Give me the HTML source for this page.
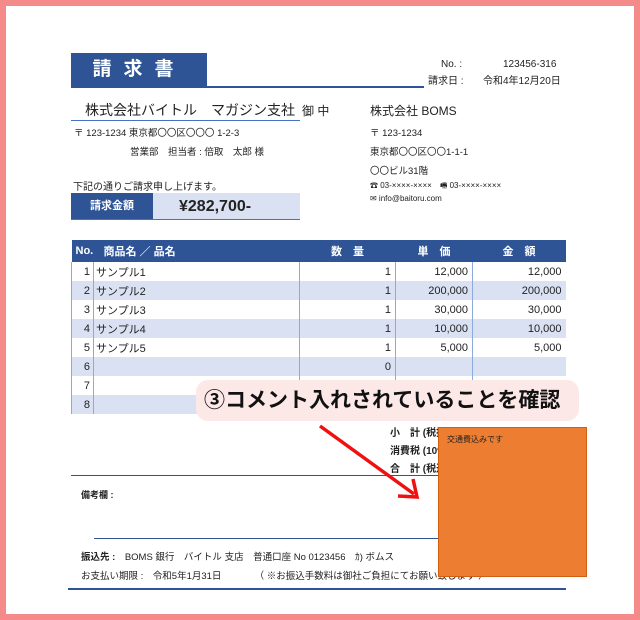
<!DOCTYPE html>
<html><head><meta charset="utf-8"><style>
*{margin:0;padding:0;box-sizing:border-box}
body{width:640px;height:620px;position:relative;background:#fff;font-family:"Liberation Sans","Noto Sans CJK JP",sans-serif;color:#222;overflow:hidden}
.frame{position:absolute;left:0;top:0;width:640px;height:620px;border:6px solid #f48a8a}
.a{position:absolute;white-space:nowrap}
.s{font-size:10px}
table{position:absolute;left:71px;top:240px;width:494px;table-layout:fixed;border-collapse:collapse;font-size:11px}
td,th{height:19px;padding:0 4px;overflow:hidden;white-space:nowrap}
th{background:#2f5496;color:#fff;height:22px;font-weight:bold;font-size:11px}
tr.b td{background:#d9e1f2}
td{border-left:1px solid #8ea9db}
td.n{text-align:right}
td:first-child{padding:0 3px}
td:nth-child(2){padding-left:2px}
</style></head><body>
<div class="frame"></div>
<div class="a" style="left:71px;top:53px;width:136px;height:34px;background:#2f5496;color:#fff;font-size:19px;font-weight:bold;line-height:34px;text-align:center;letter-spacing:12px">請求書</div>
<div class="a" style="left:71px;top:86px;width:353px;height:2px;background:#2f5496"></div>
<div class="a s" style="left:441px;top:59px">No. :</div>
<div class="a s" style="left:503px;top:59px">123456-316</div>
<div class="a s" style="left:428px;top:72px">請求日 :</div>
<div class="a s" style="left:483px;top:72px">令和4年12月20日</div>
<div class="a" style="left:85px;top:100px;font-size:14px">株式会社バイトル　マガジン支社</div>
<div class="a" style="left:302px;top:102px;font-size:12px">御 中</div>
<div class="a" style="left:71px;top:120px;width:229px;height:1px;background:#4472c4"></div>
<div class="a" style="left:74px;top:125px;font-size:9.5px">〒 123-1234 東京都〇〇区〇〇〇 1-2-3</div>
<div class="a" style="left:130px;top:144px;font-size:9.5px">営業部　担当者 : 倍取　太郎 様</div>
<div class="a" style="left:73px;top:178px;font-size:10px">下記の通りご請求申し上げます。</div>
<div class="a" style="left:71px;top:193px;width:82px;height:27px;background:#2f5496;color:#fff;font-size:11px;font-weight:bold;line-height:27px;text-align:center">請求金額</div>
<div class="a" style="left:153px;top:193px;width:147px;height:27px;background:#d9e1f2;font-size:16px;font-weight:bold;line-height:27px;padding-left:26px">¥282,700-</div>
<div class="a" style="left:71px;top:219px;width:229px;height:1px;background:#4472c4"></div>
<div class="a" style="left:370px;top:102px;font-size:12px">株式会社 BOMS</div>
<div class="a" style="left:370px;top:125px;font-size:9.5px">〒 123-1234</div>
<div class="a" style="left:370px;top:144px;font-size:9.5px">東京都〇〇区〇〇1-1-1</div>
<div class="a" style="left:370px;top:163px;font-size:9.5px">〇〇ビル31階</div>
<div class="a" style="left:370px;top:180px;font-size:8px">☎ 03-××××-××××　🖷 03-××××-××××</div>
<div class="a" style="left:370px;top:194px;font-size:8px">✉ info@baitoru.com</div>
<table>
<colgroup><col style="width:22px"><col style="width:206px"><col style="width:96px"><col style="width:77px"><col style="width:93px"></colgroup>
<tr><th style="text-align:left;padding-left:4px">No.</th><th style="text-align:left;padding-left:10px">商品名 ／ 品名</th><th>数　量</th><th>単　価</th><th>金　額</th></tr>
<tr><td class="n">1</td><td>サンプル1</td><td class="n">1</td><td class="n">12,000</td><td class="n">12,000</td></tr>
<tr class="b"><td class="n">2</td><td>サンプル2</td><td class="n">1</td><td class="n">200,000</td><td class="n">200,000</td></tr>
<tr><td class="n">3</td><td>サンプル3</td><td class="n">1</td><td class="n">30,000</td><td class="n">30,000</td></tr>
<tr class="b"><td class="n">4</td><td>サンプル4</td><td class="n">1</td><td class="n">10,000</td><td class="n">10,000</td></tr>
<tr><td class="n">5</td><td>サンプル5</td><td class="n">1</td><td class="n">5,000</td><td class="n">5,000</td></tr>
<tr class="b"><td class="n">6</td><td></td><td class="n">0</td><td></td><td></td></tr>
<tr><td class="n">7</td><td></td><td></td><td></td><td></td></tr>
<tr class="b"><td class="n">8</td><td></td><td></td><td></td><td></td></tr>
</table>
<div class="a" style="left:390px;top:424px;font-size:10px;font-weight:bold">小　計 (税抜)</div>
<div class="a" style="left:390px;top:442px;font-size:10px;font-weight:bold">消費税 (10%)</div>
<div class="a" style="left:390px;top:460px;font-size:10px;font-weight:bold">合　計 (税込)</div>
<div class="a" style="left:71px;top:475px;width:494px;height:1px;background:#2f5496"></div>
<div class="a" style="left:81px;top:488px;font-size:9px;font-weight:bold">備考欄 :</div>
<div class="a" style="left:94px;top:538px;width:470px;height:1px;background:#2f5496"></div>
<div class="a" style="left:81px;top:549px;font-size:9.5px"><b>振込先 :</b>　BOMS 銀行　バイトル 支店　普通口座 No 0123456　ｶ) ボムス</div>
<div class="a" style="left:81px;top:568px;font-size:9.5px">お支払い期限 :　令和5年1月31日　　　　（ ※お振込手数料は御社ご負担にてお願い致します ）</div>
<div class="a" style="left:68px;top:588px;width:498px;height:2px;background:#2f5496"></div>
<div class="a" style="left:196px;top:380px;width:383px;height:41px;background:#fde8e8;border-radius:12px;font-size:21px;font-weight:bold;line-height:41px;padding-left:8px;color:#111">③コメント入れされていることを確認</div>
<svg class="a" style="left:0;top:0" width="640" height="620"><line x1="320" y1="426" x2="414" y2="494" stroke="#f01010" stroke-width="3.5"/><polyline points="398,496 417,497 413,479" fill="none" stroke="#f01010" stroke-width="3.5"/></svg>
<div class="a" style="left:438px;top:427px;width:149px;height:150px;background:#ed7d31;border:1px solid #d06010;font-size:8px;padding:6px 8px;color:#222">交通費込みです</div>
</body></html>
